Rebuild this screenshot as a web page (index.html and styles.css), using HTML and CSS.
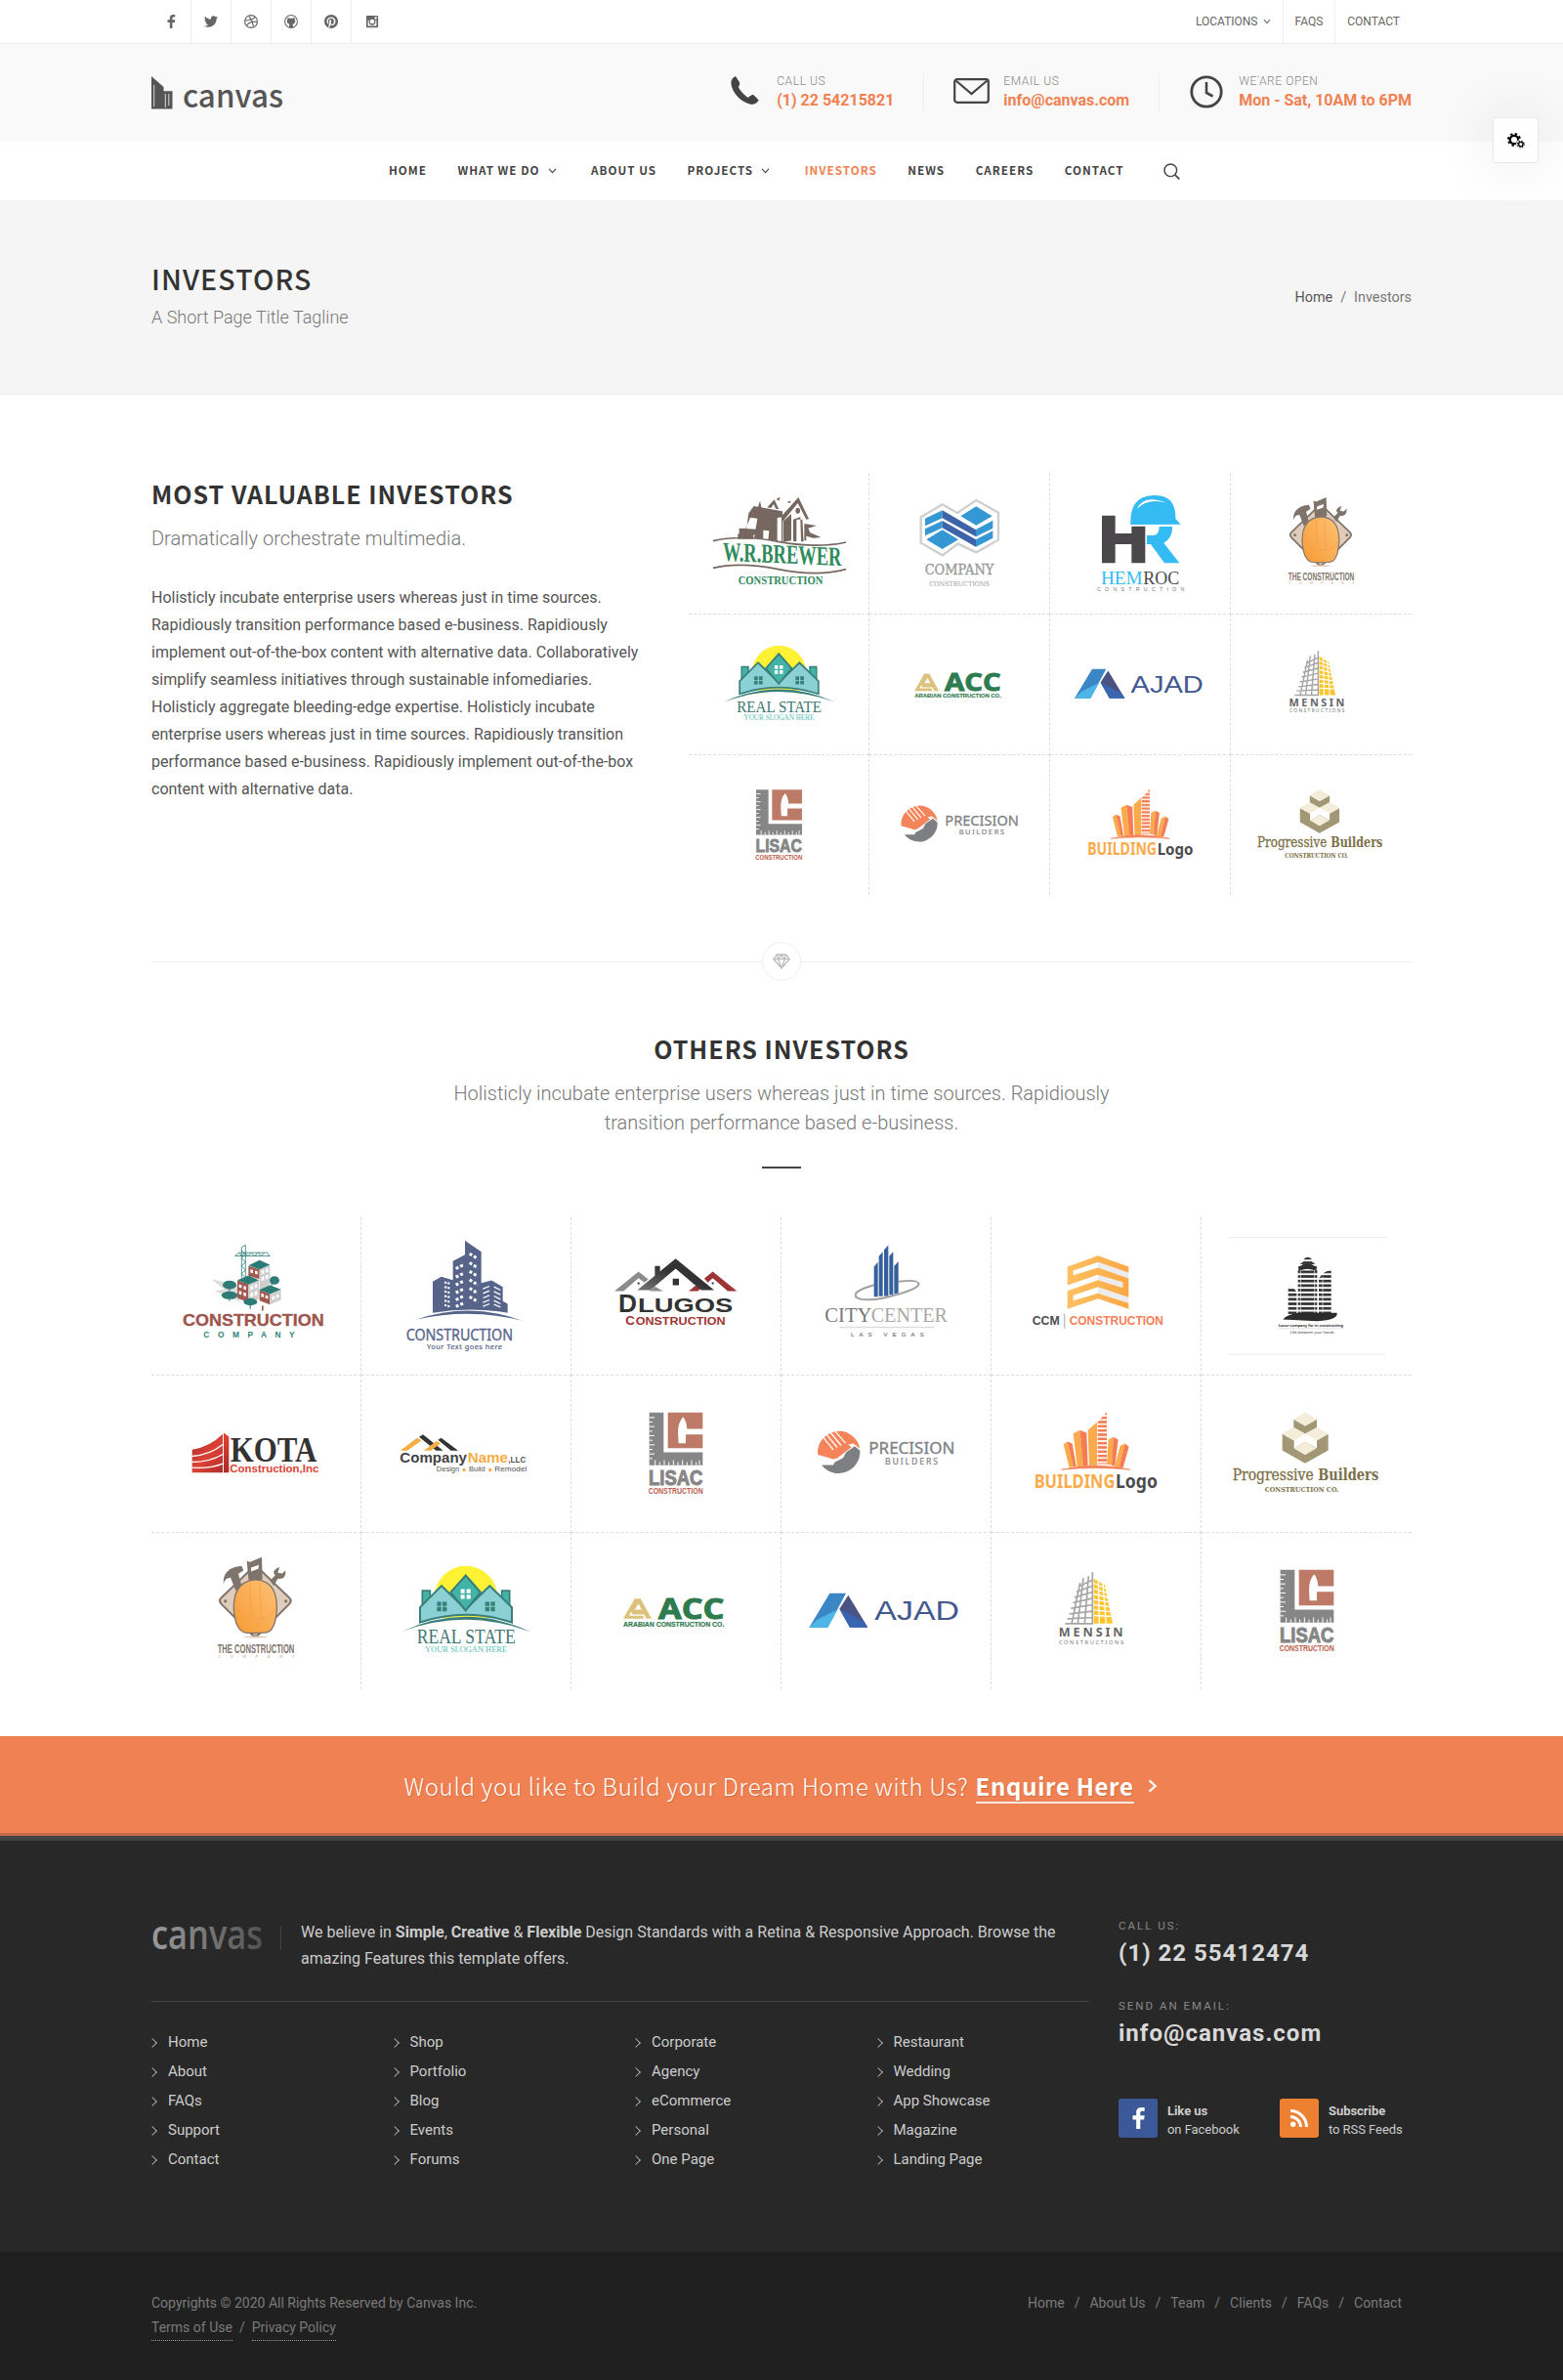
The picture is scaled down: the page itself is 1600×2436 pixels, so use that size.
FILE: index.html
```html
<!DOCTYPE html>
<html lang="en">
<head>
<meta charset="utf-8">
<title>Investors | Canvas</title>
<link rel="stylesheet" href="styles.css">
</head>
<body>

<svg class="sprite" aria-hidden="true">
  <defs>
    <linearGradient id="g-word" x1="0" x2="1" y1="0" y2="0"><stop offset="0" stop-color="#9c9c9c"/><stop offset="1" stop-color="#525252"/></linearGradient>
    <linearGradient id="g-kota" x1="0" x2="1" y1="0" y2="1"><stop offset="0" stop-color="#a32b2b"/><stop offset=".5" stop-color="#dd4234"/><stop offset="1" stop-color="#a52828"/></linearGradient>
    <linearGradient id="g-hat" x1="0" x2="1" y1="1" y2="0"><stop offset="0" stop-color="#f79a35"/><stop offset="1" stop-color="#ffc274"/></linearGradient>
    <linearGradient id="g-roof" x1="0" x2="1" y1="1" y2="0"><stop offset="0" stop-color="#777"/><stop offset=".5" stop-color="#333"/><stop offset="1" stop-color="#333"/></linearGradient>
    <linearGradient id="g-ccm" x1="0" x2="1" y1="0" y2="0"><stop offset="0" stop-color="#ffc062"/><stop offset="1" stop-color="#fba845"/></linearGradient>
    <pattern id="p-floors" width="20" height="14" patternUnits="userSpaceOnUse"><rect width="20" height="8" fill="#303030"/></pattern>
    <pattern id="p-bands" width="20" height="13" patternUnits="userSpaceOnUse" y="617"><rect width="20" height="8" fill="#f47d55"/></pattern>
    <pattern id="p-block" width="5" height="5" patternUnits="userSpaceOnUse"><rect width="5" height="5" fill="#b3a987"/><path d="M0 5L5 0" stroke="#7d7250" stroke-width="1.6"/></pattern>

    <symbol id="chev-down" viewBox="0 0 10 7"><path d="M1 1l4 4.5L9 1" fill="none" stroke="currentColor" stroke-width="1.3"/></symbol>
    <symbol id="chev-right" viewBox="0 0 7 10"><path d="M1 1l4.5 4L1 9" fill="none" stroke="currentColor" stroke-width="1.5"/></symbol>
    <symbol id="i-fb" viewBox="0 0 24 24"><path fill="currentColor" d="M14.5 24V13.5h4.2l.6-4.5h-4.8V6.2c0-1.200.5-2 2.200-2h2.600V.3C18.800.2 17.400 0 15.800 0 12.300 0 10 2.100 10 5.700V9H6v4.500h4V24z"/></symbol>
    <symbol id="i-tw" viewBox="0 0 24 24"><path fill="currentColor" d="M23.954 4.569c-.885.389-1.830.654-2.825.775 1.014-.611 1.794-1.574 2.163-2.723-.951.555-2.005.959-3.127 1.184-.896-.959-2.173-1.559-3.591-1.559-2.717 0-4.920 2.203-4.920 4.917 0 .390.045.765.127 1.124C7.691 8.094 4.066 6.130 1.640 3.161c-.427.722-.666 1.561-.666 2.475 0 1.710.870 3.213 2.188 4.096-.807-.026-1.566-.248-2.228-.616v.061c0 2.385 1.693 4.374 3.946 4.827-.413.111-.849.171-1.296.171-.314 0-.615-.030-.916-.086.631 1.953 2.445 3.377 4.604 3.417-1.680 1.319-3.809 2.105-6.102 2.105-.390 0-.779-.023-1.170-.067 2.189 1.394 4.768 2.209 7.557 2.209 9.054 0 13.999-7.496 13.999-13.986 0-.209 0-.420-.015-.630.961-.689 1.800-1.560 2.460-2.548z"/></symbol>
    <symbol id="i-dr" viewBox="0 0 24 24"><g fill="none" stroke="currentColor" stroke-width="1.900"><circle cx="12" cy="12" r="11"/><path d="M8 2c4 5 7 11 8.500 20M1 10c8 0 14-1 18.500-6M4 20c4-7 11-9 19-7"/></g></symbol>
    <symbol id="i-gh" viewBox="0 0 24 24"><circle cx="12" cy="12" r="11" fill="none" stroke="currentColor" stroke-width="1.800"/><path fill="currentColor" d="M6 5l3.200 1.600a12 12 0 0 1 5.600 0L18 5c.5 1.500.5 2.500.3 3.400C20 11 19.500 16 14.500 16.500c.6.800.7 1.500.7 2.500v4h-6.400v-4c0-1 .1-1.700.7-2.500C4.500 16 4 11 5.700 8.400 5.500 7.500 5.500 6.500 6 5z"/></symbol>
    <symbol id="i-pi" viewBox="0 0 24 24"><path fill="currentColor" d="M12 0C5.373 0 0 5.372 0 12c0 5.084 3.163 9.426 7.627 11.174-.105-.949-.2-2.405.042-3.441.218-.937 1.407-5.965 1.407-5.965s-.359-.719-.359-1.782c0-1.668.967-2.914 2.171-2.914 1.023 0 1.518.769 1.518 1.690 0 1.029-.655 2.568-.994 3.995-.283 1.194.599 2.169 1.777 2.169 2.133 0 3.772-2.249 3.772-5.495 0-2.873-2.064-4.882-5.012-4.882-3.414 0-5.418 2.561-5.418 5.207 0 1.031.397 2.138.893 2.738.098.119.112.224.083.345l-.333 1.360c-.053.220-.174.267-.402.161-1.499-.698-2.436-2.889-2.436-4.649 0-3.785 2.750-7.262 7.929-7.262 4.163 0 7.398 2.967 7.398 6.931 0 4.136-2.607 7.464-6.227 7.464-1.216 0-2.359-.631-2.750-1.378l-.748 2.853c-.271 1.043-1.002 2.350-1.492 3.146 1.124.347 2.317.535 3.554.535 6.627 0 12-5.373 12-12S18.627 0 12 0z"/></symbol>
    <symbol id="i-in" viewBox="0 0 24 24"><path fill="currentColor" fill-rule="evenodd" d="M3.500 1.500h17a2 2 0 0 1 2 2v17a2 2 0 0 1-2 2h-17a2 2 0 0 1-2-2v-17a2 2 0 0 1 2-2zM16.500 4v3.500H20V4zM4.500 10v9.500h15V10h-2a6 6 0 1 1-11 0zM12 8a4 4 0 1 0 0 8 4 4 0 0 0 0-8z"/></symbol>

    <g id="m-hat">
      <path d="M335 1092q6 0 12 6l92 88q10 10 0 20l-92 92q-12 14-24 0l-92-92q-10-10 0-20l92-88q6-6 12-6z" fill="#dfccbb" stroke="#7f746c" stroke-width="6"/>
      <circle cx="243" cy="1197" r="5" fill="#7f746c"/><circle cx="429" cy="1197" r="5" fill="#7f746c"/>
      <g fill="#7f746c"><path d="M237 1144q-2-50 56-55l6 14-16 10 10 36-18 16-16-40q-16 0-22 19z"/><path d="M309 1074l10 3 36-15 2 68-42 8z"/><path d="M380 1134l16-16q-14-14 14-26l-6 18 14 2 10-10q2 30-24 26l-12 22z"/></g>
      <path d="M322 1094l24-8-2 12-22 8z" fill="#fff"/>
      <path d="M337 1131q66 4 64 90-4 72-36 73-32 2-60 0-32-6-36-73-2-86 68-90z" fill="url(#g-hat)" stroke="#7f746c" stroke-width="4"/>
      <path d="M273 1215q30 30 54 36 16 2 28 0 30-6 44-36M320 1140q-2 60 4 85l6 25M350 1140q-2 60 4 80v30" fill="none" stroke="#f0a04c" stroke-width="2.500"/>
      <ellipse cx="336" cy="1307" rx="36" ry="3" fill="#e0cdbb"/>
    </g>
    <g id="m-real">
      <circle cx="982" cy="1186" r="97" fill="#fff133"/>
      <path d="M780 1290q200-90 402 0v60H780z" fill="#fff"/>
      <path d="M848 1165h24v35l-24 20zM1092 1165h24v50l-24-15z" fill="#44b3a7" stroke="#387f7a" stroke-width="5"/>
      <path d="M841 1262v-46l66-66 74 72 74-72 68 66v46q-140-46-282 0z" fill="#8ad0d5" stroke="#387f7a" stroke-width="6"/>
      <path d="M981 1118l46 52-46 56-46-56z" fill="#44b3a7" stroke="#387f7a" stroke-width="6"/>
      <path d="M783 1291q200-92 398 0-200-74-398 0z" fill="#387f7a"/>
      <path d="M966 1160h12v13h-12zM984 1160h12v13h-12zM966 1177h12v13h-12zM984 1177h12v13h-12z" fill="#fff"/>
      <path d="M893 1199h13v13h-13zM910 1199h13v13h-13zM893 1215h13v13h-13zM910 1215h13v13h-13zM1041 1199h13v13h-13zM1058 1199h13v13h-13zM1041 1215h13v13h-13zM1058 1215h13v13h-13z" fill="#387f7a"/>
    </g>
    <g id="m-acc"><path d="M210 1189h18l34 62h-16l-24-46-12 18h22l10 15h-38l-5-8-6 12h44v9h-62z" fill="#dcc27d"/></g>
    <g id="m-ajad">
      <path d="M809 1173h50l-56 105h-57z" fill="#3b86c4"/><path d="M746 1278l24-24 64-32-31 56z" fill="#4fb4e6"/>
      <path d="M866 1179l60 99h-55l-32-57z" fill="#4a5484"/><path d="M839 1221l32 57h55l-12-18z" fill="#3b65b0"/>
    </g>
    <g id="m-mensin">
      <path d="M326 1108v158h-84M262 1266l26-125M281 1266l17-140M302 1266l12-146M284 1152l42-20M277 1168l49-18M271 1185l55-16M266 1202l60-14M260 1219l66-11M255 1236l71-8M249 1251l77-4" fill="none" stroke="#a5a5a5" stroke-width="5"/>
      <path d="M330 1128l34 20 24 118h-58z" fill="#fdc52f"/>
      <path d="M344 1128l3 140M358 1140l10 128M330 1142l42 18M330 1158l48 16M330 1175l50 12M330 1192l54 9M330 1208l58 8M330 1224l60 6M330 1241l62 3" fill="none" stroke="#fff" stroke-width="4"/>
    </g>
    <g id="m-lisac">
      <path d="M900 1101h44v122h120v40H900z" fill="#868686"/>
      <path d="M957 1101h107v50h-48q-2-24-12-37-16 16-16 48l2 33h22v-27h52v42H957z" fill="#bc7a67"/>
      <path d="M900 1116h16M900 1130h10M900 1144h16M900 1158h10M900 1172h16M900 1186h10M900 1200h16M900 1214h10M900 1228h16M900 1242h10M918 1263v-16M932 1263v-10M946 1263v-16M960 1263v-10M974 1263v-16M988 1263v-10M1002 1263v-16M1016 1263v-10M1030 1263v-16M1044 1263v-10M1054 1263v-16" stroke="#fff" stroke-width="3"/>
    </g>
    <g id="m-precision">
      <path d="M838 675a66 66 0 0 1 64 54l-20-16-16 3 10 8-44 34-12 3-48-14a66 66 0 0 1 66-72z" fill="#f5845a"/>
      <path d="M784 688l36 44M796 681l36 44M810 677l34 42M826 676l32 36" stroke="#fff" stroke-width="4"/>
      <path d="M902 735a66 66 0 0 1-118 44h36l4-8 26-14 10-18 26-18z" fill="#7d7f82"/>
    </g>
    <g id="m-blogo">
      <path d="M237 715l12-8 20 76-14 4zM267 682l20-10 12 110-20 2zM312 672l28-25v133l-24 2zM375 700l15-7-4 86-16-2zM411 720l15-7-18 74-14-2z" fill="#fbab4c"/>
      <path d="M249 707l15 6 12 70-8 2zM287 672l21 8 4 102-14 1zM390 693l15 8-10 82-10-3zM426 713l12 10-18 64-12-1z" fill="#f47d55"/>
      <path d="M342 648l28-32v160h-28z" fill="url(#p-bands)"/>
      <path d="M231 793q104-24 210 0-104-10-210 0z" fill="#f47d55" stroke="#f47d55" stroke-width="2"/>
    </g>
    <g id="m-prog">
      <path d="M941 639l35 20 36-20v28l-36 16-35-18zM906 684l36 20v24l34-20 36 20v-24l35-20v50l-71 40-70-40z" fill="url(#p-block)"/>
      <path d="M976 617l37 22-37 20-35-20zM941 663l35 20-34 20-36-20zM1012 663l35 20-35 20-36-20zM976 708l34 20-34 20-34-20z" fill="#f4edda"/>
    </g>
  </defs>
</svg>

<div class="topbar">
  <div class="container topbar-row">
    <ul class="social">
      <li><svg><use href="#i-fb"/></svg></li>
      <li><svg><use href="#i-tw"/></svg></li>
      <li><svg><use href="#i-dr"/></svg></li>
      <li><svg><use href="#i-gh"/></svg></li>
      <li><svg><use href="#i-pi"/></svg></li>
      <li><svg><use href="#i-in"/></svg></li>
    </ul>
    <ul class="toplinks">
      <li>LOCATIONS <svg class="cd"><use href="#chev-down"/></svg></li>
      <li>FAQS</li>
      <li>CONTACT</li>
    </ul>
  </div>
</div>

<header class="header">
  <div class="container header-row">
    <a class="logo">
      <svg width="140" height="44" viewBox="0 0 140 44">
        <path d="M0 3l12.500 11v4.200H21.500V36.500H0z" fill="#555"/><path d="M2.700 12v22M14.300 21v14M17.800 21v12" stroke="#f9f9f9" stroke-width=".8"/>
        <text x="32" y="34.500" class="head m" font-size="32.500" fill="#555" textLength="103" lengthAdjust="spacingAndGlyphs">canvas</text>
      </svg>
    </a>
    <ul class="contacts">
      <li>
        <svg class="c-icon phone" viewBox="0 0 29 29"><path d="M5 0C1.500 1.500 0 4.500.5 8 1.500 17 11 27 20.500 28.800 24 29.300 27 27.500 28.700 24.500L23.300 19c-2.500.2-4 1.300-5.300 3-4-2.500-8.500-7-10.200-11.300C9.200 9.500 9.300 8 9.200 6.500z" fill="#444"/></svg>
        <div><span>CALL US</span><strong>(1) 22 54215821</strong></div>
      </li>
      <li>
        <svg class="c-icon mail" viewBox="0 0 37 26"><rect x="1.200" y="1.200" width="34.600" height="23.600" rx="2.500" fill="none" stroke="#444" stroke-width="2.200"/><path d="M2.500 2.500L18.500 16 34.500 2.500" fill="none" stroke="#444" stroke-width="2.200"/></svg>
        <div><span>EMAIL US</span><strong>info@canvas.com</strong></div>
      </li>
      <li>
        <svg class="c-icon clock" viewBox="0 0 34 34"><circle cx="17" cy="17" r="15.200" fill="none" stroke="#444" stroke-width="2.800"/><path d="M17 7v11l6.500 3.500" fill="none" stroke="#444" stroke-width="2.600"/></svg>
        <div><span>WE'ARE OPEN</span><strong>Mon - Sat, 10AM to 6PM</strong></div>
      </li>
    </ul>
  </div>
</header>

<nav class="nav">
  <a>HOME</a>
  <a>WHAT WE DO<svg class="nd"><use href="#chev-down"/></svg></a>
  <a>ABOUT US</a>
  <a>PROJECTS<svg class="nd"><use href="#chev-down"/></svg></a>
  <a class="current">INVESTORS</a>
  <a>NEWS</a>
  <a>CAREERS</a>
  <a>CONTACT</a>
  <svg class="search" viewBox="0 0 17 17"><circle cx="7.300" cy="7.300" r="6.300" fill="none" stroke="#444" stroke-width="1.400"/><path d="M11.800 11.800l4.500 4.500" stroke="#444" stroke-width="1.700"/></svg>
</nav>

<div class="switcher">
  <svg viewBox="0 0 20 18" width="20" height="18"><circle cx="8" cy="8" r="4.200" fill="none" stroke="#000" stroke-width="2.200"/><circle cx="8" cy="8" r="6" fill="none" stroke="#000" stroke-width="2" stroke-dasharray="2.360 2.352"/><circle cx="14.800" cy="12.600" r="4.800" fill="#fff"/><circle cx="14.800" cy="12.600" r="2.200" fill="none" stroke="#000" stroke-width="1.300"/><circle cx="14.800" cy="12.600" r="3.400" fill="none" stroke="#000" stroke-width="1.200" stroke-dasharray="1.300 1.370"/></svg>
</div>

<section class="page-title">
  <div class="container title-row">
    <div>
      <h1>INVESTORS</h1>
      <p>A Short Page Title Tagline</p>
    </div>
    <div class="crumbs"><a>Home</a><i>/</i><span>Investors</span></div>
  </div>
</section>

<main class="container content">
  <div class="intro">
    <div class="intro-text">
      <h3>MOST VALUABLE INVESTORS</h3>
      <p class="lead">Dramatically orchestrate multimedia.</p>
      <p class="copy">Holisticly incubate enterprise users whereas just in time sources.<br>Rapidiously transition performance based e-business. Rapidiously<br>implement out-of-the-box content with alternative data. Collaboratively<br>simplify seamless initiatives through sustainable infomediaries.<br>Holisticly aggregate bleeding-edge expertise. Holisticly incubate<br>enterprise users whereas just in time sources. Rapidiously transition<br>performance based e-business. Rapidiously implement out-of-the-box<br>content with alternative data.</p>
    </div>
    <ul class="clients four">
      <li><svg viewBox="84 72 417 312">
        <g fill="#766861"><path d="M199 136l16-22 88 16v18l-16 2v72l-28-4 3-28-18-2v26l-28-2 10-60-22-3-24 56h34v10h-48v-16h24z"/><path d="M300 145l52-58 32 66-8 2-26-50-46 56v63l-4 2z"/><path d="M306 160l24-22v82l-24 4zM336 155l22-8v8h-12v68l-10-2zM358 155h6l4 68h-8zM370 168l38 6-26 8 6 14 34 14-24 2-22-6v14h-6z"/><path d="M170 182l66 4-16 14-22 12-28-2zM226 122l8-24 5 24zM256 118l22-24 14 30-10-2-6-14-8 12zM284 92l12-6-4 12zM318 100l12-2-6 8z"/></g>
        <ellipse cx="350" cy="128" rx="7" ry="9" fill="#766861"/>
        <path d="M90 221q80-20 200 2t208 2M90 304q80-20 200 4t208 0" fill="none" stroke="#766861" stroke-width="5"/>
        <text transform="translate(120 281) skewY(2.600)" class="serif b" font-size="83" fill="#2f8a5c" textLength="364" lengthAdjust="spacingAndGlyphs">W.R.BREWER</text>
        <text x="167" y="353" class="serif b" font-size="40" fill="#2f8a5c" textLength="260" lengthAdjust="spacingAndGlyphs">CONSTRUCTION</text>
      </svg></li>
      <li><svg viewBox="639 72 417 312">
        <path d="M728 148l66-39 46 26 58-39 68 38v84l-68 38-56-26-48 35-66-38z" fill="none" stroke="#cfcfcf" stroke-width="7"/>
        <path d="M850 145l48-30 49 30-49 28zM745 217l49-30 49 30-49 29z" fill="#3597d3"/>
        <path d="M741 152l53-25v24l-53 24zM741 184l53-25v22l-53 24zM949 158v24l-52 26v-22zM949 190v22l-52 27v-22z" fill="#3597d3"/>
        <path d="M794 127l103 60v21l-103-57zM794 159l103 58v22l-103-58z" fill="#3d63a8"/>
        <text x="740" y="323" class="dserif" font-size="42" fill="#999" stroke="#999" textLength="212" lengthAdjust="spacingAndGlyphs">COMPANY</text>
        <text x="754" y="359" class="dserif" font-size="21" fill="#999" textLength="185" lengthAdjust="spacingAndGlyphs">CONSTRUCTIONS</text>
      </svg></li>
      <li><svg viewBox="84 72 417 312">
        <path d="M174 143h41v55h50v-22h42v113h-42v-58h-50v58h-41z" fill="#4a484a"/>
        <path d="M312 204h18q20 0 20-27h40q2 34-26 50l48 62h-46l-42-58h-12zM262 171q-4-86 68-90t70 72l16 17z" fill="#34bbf3"/>
        <path d="M282 122q20-46 92-18-60-16-92 18z" fill="#fff"/>
        <text x="171" y="355" class="serif" font-size="56" fill="#34bbf3" textLength="128" lengthAdjust="spacingAndGlyphs">HEM</text>
        <text x="301" y="355" class="serif" font-size="56" fill="#4a484a" textLength="111" lengthAdjust="spacingAndGlyphs">ROC</text>
        <text x="159" y="375" class="sans" font-size="16" fill="#777" textLength="268">CONSTRUCTION</text>
      </svg></li>
      <li><svg viewBox="94 1045 486 362"><use href="#m-hat"/>
        <text x="219" y="1358" class="sans b" font-size="41" fill="#7f746c" textLength="236" lengthAdjust="spacingAndGlyphs">THE CONSTRUCTION</text>
        <text x="221" y="1372" class="sans b" font-size="12" fill="#d8bfae" textLength="234">COMPANY</text>
      </svg></li>
      <li><svg viewBox="739 1045 486 362"><use href="#m-real"/>
        <text x="831" y="1327" class="serif" font-size="62" fill="#3e7672" textLength="303" lengthAdjust="spacingAndGlyphs">REAL STATE</text>
        <text x="856" y="1355" class="serif" font-size="27" fill="#56c0b4" textLength="252" lengthAdjust="spacingAndGlyphs">YOUR SLOGAN HERE</text>
      </svg></li>
      <li><svg viewBox="94 1045 486 362"><use href="#m-acc"/>
        <text x="283" y="1251" class="open b" font-size="86" fill="#2f7b50" stroke="#2f7b50" stroke-width="3" textLength="202" lengthAdjust="spacingAndGlyphs">ACC</text>
        <text x="175" y="1275" class="sans b" font-size="19" fill="#2f7b50" stroke="#2f7b50" stroke-width=".5" textLength="310" lengthAdjust="spacingAndGlyphs">ARABIAN CONSTRUCTION CO.</text>
      </svg></li>
      <li><svg viewBox="739 1045 486 362"><use href="#m-ajad"/>
        <text x="947" y="1256" class="sans" font-size="82" fill="#42588f" textLength="260" lengthAdjust="spacingAndGlyphs">AJAD</text>
      </svg></li>
      <li><svg viewBox="94 1045 486 362"><use href="#m-mensin"/>
        <text x="222" y="1305" class="noto b" font-size="38" fill="#666" textLength="198">MENSIN</text>
        <text x="223" y="1329" class="noto" font-size="17" fill="#777" textLength="198">CONSTRUCTIONS</text>
      </svg></li>
      <li><svg viewBox="739 1045 486 362"><use href="#m-lisac"/>
        <text x="898" y="1323" class="sans b" font-size="66" fill="#868686" stroke="#868686" stroke-width="3" textLength="166" lengthAdjust="spacingAndGlyphs">LISAC</text>
        <text x="897" y="1351" class="sans b" font-size="25" fill="#bb5d4d" textLength="168" lengthAdjust="spacingAndGlyphs">CONSTRUCTION</text>
      </svg></li>
      <li><svg viewBox="739 562 486 362"><use href="#m-precision"/>
        <text x="929" y="746" class="noto" font-size="51" fill="#808285" stroke="#808285" textLength="264" lengthAdjust="spacingAndGlyphs">PRECISION</text>
        <text x="979" y="777" class="noto" font-size="26" fill="#808285" stroke="#808285" stroke-width=".6" textLength="162">BUILDERS</text>
      </svg></li>
      <li><svg viewBox="94 562 486 362"><use href="#m-blogo"/>
        <text x="147" y="850" class="noto b" font-size="60" fill="#fbab4c" textLength="248" lengthAdjust="spacingAndGlyphs">BUILDING</text>
        <text x="397" y="850" class="noto b" font-size="57" fill="#4a4b4d" textLength="129" lengthAdjust="spacingAndGlyphs">Logo</text>
      </svg></li>
      <li><svg viewBox="739 562 486 362"><use href="#m-prog"/>
        <text x="753" y="825" class="dserif" font-size="50" fill="#7d7048" stroke="#7d7048" textLength="249" lengthAdjust="spacingAndGlyphs">Progressive</text>
        <text x="1016" y="825" class="dserif b" font-size="50" fill="#7d7048" textLength="186" lengthAdjust="spacingAndGlyphs">Builders</text>
        <text x="852" y="863" class="dserif b" font-size="24" fill="#7d7048" textLength="227" lengthAdjust="spacingAndGlyphs">CONSTRUCTION CO.</text>
      </svg></li>
    </ul>
  </div>

  <div class="divider"><span><svg viewBox="0 0 18 16" width="18" height="16"><path d="M4.500 1h9l3.700 4.700L9 15 .8 5.700zM.8 5.700h16.400M5.500 5.700L9 15l3.500-9.300M4.500 1l1.300 4.700L9 1.500l3.200 4.200L13.500 1" fill="none" stroke="#bbb" stroke-width="1.300"/></svg></span></div>

  <div class="heading">
    <h3>OTHERS INVESTORS</h3>
    <p>Holisticly incubate enterprise users whereas just in time sources. Rapidiously<br>transition performance based e-business.</p>
  </div>

  <ul class="clients six">
    <li><svg viewBox="94 79 486 362">
      <path d="M200 208l90 20v50l-80-34 30-4z" fill="#ddd"/>
      <path d="M293 205V110l12-6v100M293 120l12 12-12 12 12 12-12 12 12 12-12 12 12 12M273 137l12-10h86l9 10zM285 127l8 10 10-10 10 10 10-10 10 10 10-10 10 10 10-10" fill="none" stroke="#34827d" stroke-width="2.500"/>
      <path d="M314 168l34 10v30l-34-10zM280 212l34 12v56l-34-14zM348 242l32 12v32l-32-12z" fill="#a4574e"/>
      <path d="M348 178l32-14v64l-32 14zM314 224l32-14v60l-32 12zM380 254l34-14v32l-34 14z" fill="#cfcfcf"/>
      <path d="M314 166l34-16 32 14-32 14zM280 211l34-14 32 14-32 14zM346 241l34-14 34 13-34 14z" fill="#2b7a75"/>
      <path d="M320 178l8 2v10l-8-2zM334 182l8 2v10l-8-2zM285 224l8 2v10l-8-2zM299 229l8 2v10l-8-2zM285 244l8 2v10l-8-2zM299 249l8 2v10l-8-2zM354 182l8-3v12l-8 3zM367 177l8-3v12l-8 3zM354 202l8-3v12l-8 3zM367 197l8-3v12l-8 3zM320 230l8-3v12l-8 3zM333 225l8-3v12l-8 3zM320 252l8-3v12l-8 3zM333 247l8-3v12l-8 3zM353 252l8 2v10l-8-2zM366 257l8 2v10l-8-2zM386 262l8-3v10l-8 3zM399 257l8-3v10l-8 3z" fill="#fff"/>
      <g fill="#2f7b77"><ellipse cx="256" cy="226" rx="21" ry="13"/><ellipse cx="256" cy="258" rx="25" ry="12"/><ellipse cx="320" cy="278" rx="21" ry="11"/><ellipse cx="394" cy="212" rx="15" ry="13"/><path d="M254 226h3v50h-3zM318 280h3v20h-3zM384 212h3v18h-3z"/></g>
      <path d="M355 290h5v15h-5z" fill="#a4574e"/>
      <text x="112" y="353" class="sans b" font-size="50" fill="#9d554e" stroke="#9d554e" textLength="434" lengthAdjust="spacingAndGlyphs">CONSTRUCTION</text>
      <text x="176" y="387" class="sans b" font-size="25" fill="#2f7f7b" textLength="280">COMPANY</text>
    </svg></li>
    <li><svg viewBox="739 79 486 362">
      <path d="M880 314v-98l26-15 36 10v-58l37-20V90l50 34v96l32-8 34 20v44l15 8v28q-114-20-230 0z" fill="#57648a"/>
      <path d="M830 332q166-56 325 4-160-40-325-4z" fill="#57648a"/>
      <path d="M916 218l16 4M916 232l16 4M916 246l16 4M916 260l16 4M916 274l16 4M916 288l16 4" stroke="#fff" stroke-width="6" stroke-dasharray="7 3"/>
      <path d="M951 176l24-12M951 202l24-12M951 226l24-12M951 250l24-12M951 272l24-12M951 292l24-10M993 130l26 16M993 158l26 16M993 184l26 16M993 210l26 16M993 236l26 16M993 262l26 16" stroke="#fff" stroke-width="9" stroke-dasharray="9 6"/>
      <path d="M1034 238l20-8M1034 252l20-8M1034 266l20-8M1034 280l20-8M1034 292l20-8M1068 232l20 10M1068 246l20 10M1068 260l20 10M1068 274l20 10M1068 286l20 8" stroke="#fff" stroke-width="4"/>
      <text x="798" y="397" class="noto" font-size="51" fill="#57648a" stroke="#57648a" textLength="328" lengthAdjust="spacingAndGlyphs">CONSTRUCTION</text>
      <text x="862" y="425" class="noto" font-size="22" fill="#57648a" stroke="#57648a" stroke-width=".6" textLength="231">Your Text goes here</text>
    </svg></li>
    <li><svg viewBox="94 79 486 362">
      <path d="M148 245l74-60 30 24-12 10-18-14-46 40zM256 245l16-14 26 14z" fill="#8c8c8c"/>
      <path d="M376 245l74-60 74 60h-28l-46-40-46 40z" fill="#9f3434"/>
      <path d="M400 222l20-20 36 40h-36z" fill="#fff"/>
      <path d="M218 242l54-44v-30h16v16l48-39 118 97h-40l-78-66-78 66z" fill="url(#g-roof)"/>
      <path d="M327 207h19v20h-19zM219 218h6v6h-6zM447 218h6v6h-6z" fill="#333"/>
      <text y="310" class="sans b" fill="#333"><tspan x="160" font-size="76" textLength="57" lengthAdjust="spacingAndGlyphs">D</tspan><tspan x="220" font-size="62" textLength="292" lengthAdjust="spacingAndGlyphs">LUGOS</tspan></text>
      <text y="348" class="sans b" fill="#9f3434"><tspan x="182" font-size="39" textLength="29" lengthAdjust="spacingAndGlyphs">C</tspan><tspan x="213" font-size="33" textLength="276" lengthAdjust="spacingAndGlyphs">ONSTRUCTION</tspan></text>
    </svg></li>
    <li><svg viewBox="739 79 486 362">
      <path d="M945 226q-70 20-54 38 20 16 100-2 90-22 92-40-6-14-62-6" fill="none" stroke="#a0a0a0" stroke-width="6"/>
      <path d="M945 170l12-14v106h-12zM960 138l12-14v137h-12zM976 118l13-14v156h-13zM992 138l12-14v132h-12zM1007 168l13-14v97l-13 3z" fill="#34619b"/>
      <text x="794" y="340" class="serif" font-size="65" fill="#777" textLength="144" lengthAdjust="spacingAndGlyphs">CITY</text>
      <text x="936" y="340" class="serif" font-size="65" fill="#a9a9a9" textLength="235" lengthAdjust="spacingAndGlyphs">CENTER</text>
      <path d="M840 356h290" stroke="#ddd" stroke-width="5"/>
      <text x="874" y="384" class="sans" font-size="18" fill="#777" stroke="#777" stroke-width=".5" textLength="224">LAS VEGAS</text>
    </svg></li>
    <li><svg viewBox="94 79 486 362">
      <path d="M343 155l94 32v20l-94-32zM343 230l94 32v20l-94-32zM343 193l76 24v18l-76-22z" fill="#ececee"/>
      <path d="M343 136l94 34v18l-94-32-76 26v14l76-23 94 33v58l-94-32-76 26v16l76-22 94 30v18l-94-32-94 32v-56l94-33 76 24v-18l-76-22-94 32v-57z" fill="url(#g-ccm)"/>
      <text x="141" y="350" class="sans b" font-size="37" fill="#4b4d50" textLength="84" lengthAdjust="spacingAndGlyphs">CCM</text>
      <path d="M240 315v45" stroke="#c5c5c8" stroke-width="5"/>
      <text x="255" y="350" class="sans b" font-size="37" fill="#f77f5a" textLength="289" lengthAdjust="spacingAndGlyphs">CONSTRUCTION</text>
    </svg></li>
    <li><svg viewBox="739 79 486 362">
      <path d="M739 80h486M739 439h486" stroke="#ededed" stroke-width="3"/>
      <path d="M954 316V176q4-16 16-20 0-14 14-15 14 1 14 15 12 4 15 20v140zM924 316v-82q18-4 26 16v66zM1018 316V206q18-26 38-24v134z" fill="url(#p-floors)"/>
      <path d="M954 186q4-26 29-26t30 26q-30-18-59 0z" fill="#303030"/>
      <path d="M962 180v136M1005 180v136M1030 200v116" stroke="#fff" stroke-width="2"/>
      <path d="M908 332q10-14 46-20h120q4 22-60 25z" fill="#2b2b2b"/>
      <text x="894" y="355" class="noto b" font-size="12" fill="#333" textLength="199" lengthAdjust="spacingAndGlyphs">Luxor company for in constructing</text>
      <path d="M894 360h199" stroke="#aaa" stroke-width="1"/>
      <text x="931" y="376" class="noto" font-size="12" fill="#333" textLength="134" lengthAdjust="spacingAndGlyphs">Life between your hands</text>
    </svg></li>
    <li><svg viewBox="94 562 486 362">
      <path d="M141 732q54-8 94-48v118h-94zM238 680l16 12v110h-16z" fill="url(#g-kota)"/>
      <path d="M141 752q54-4 94-36M141 770q54 0 94-24M141 787q54 4 94-12" fill="none" stroke="#fff" stroke-width="4"/>
      <text x="258" y="770" class="serif b" font-size="108" fill="#333" textLength="266" lengthAdjust="spacingAndGlyphs">KOTA</text>
      <text x="257" y="801" class="sans b" font-size="35" fill="#e04236" textLength="273" lengthAdjust="spacingAndGlyphs">Construction,Inc</text>
    </svg></li>
    <li><svg viewBox="739 562 486 362">
      <path d="M780 735l52-39 14 7-44 32z" fill="#f5ad45"/><path d="M838 693l12-8 62 50h-22z" fill="#333"/><path d="M852 735l40-30 12 8-30 22z" fill="#f5ad45"/><path d="M896 702l10-6 52 39h-22z" fill="#333"/>
      <text x="779" y="773" class="sans b" font-size="44" fill="#444" textLength="206" lengthAdjust="spacingAndGlyphs">Company</text>
      <text x="987" y="773" class="sans b" font-size="44" fill="#f5ad45" textLength="124" lengthAdjust="spacingAndGlyphs">Name</text>
      <text x="1112" y="773" class="sans b" font-size="27" fill="#555" textLength="54" lengthAdjust="spacingAndGlyphs">,LLC</text>
      <g class="sans" font-size="24" fill="#555"><text x="891" y="800" textLength="71" lengthAdjust="spacingAndGlyphs">Design</text><text x="991" y="800" textLength="50" lengthAdjust="spacingAndGlyphs">Build</text><text x="1070" y="800" textLength="99" lengthAdjust="spacingAndGlyphs">Remodel</text></g>
      <circle cx="976" cy="794" r="5" fill="#f5ad45"/><circle cx="1056" cy="794" r="5" fill="#f5ad45"/>
    </svg></li>
    <li><svg viewBox="739 1045 486 362"><use href="#m-lisac"/>
      <text x="898" y="1323" class="sans b" font-size="66" fill="#868686" stroke="#868686" stroke-width="3" textLength="166" lengthAdjust="spacingAndGlyphs">LISAC</text>
      <text x="897" y="1351" class="sans b" font-size="25" fill="#bb5d4d" textLength="168" lengthAdjust="spacingAndGlyphs">CONSTRUCTION</text>
    </svg></li>
    <li><svg viewBox="739 562 486 362"><use href="#m-precision"/>
      <text x="929" y="746" class="noto" font-size="51" fill="#808285" stroke="#808285" textLength="264" lengthAdjust="spacingAndGlyphs">PRECISION</text>
      <text x="979" y="777" class="noto" font-size="26" fill="#808285" stroke="#808285" stroke-width=".6" textLength="162">BUILDERS</text>
    </svg></li>
    <li><svg viewBox="94 562 486 362"><use href="#m-blogo"/>
      <text x="147" y="850" class="noto b" font-size="60" fill="#fbab4c" textLength="248" lengthAdjust="spacingAndGlyphs">BUILDING</text>
      <text x="397" y="850" class="noto b" font-size="57" fill="#4a4b4d" textLength="129" lengthAdjust="spacingAndGlyphs">Logo</text>
    </svg></li>
    <li><svg viewBox="739 562 486 362"><use href="#m-prog"/>
      <text x="753" y="825" class="dserif" font-size="50" fill="#7d7048" stroke="#7d7048" textLength="249" lengthAdjust="spacingAndGlyphs">Progressive</text>
      <text x="1016" y="825" class="dserif b" font-size="50" fill="#7d7048" textLength="186" lengthAdjust="spacingAndGlyphs">Builders</text>
      <text x="852" y="863" class="dserif b" font-size="24" fill="#7d7048" textLength="227" lengthAdjust="spacingAndGlyphs">CONSTRUCTION CO.</text>
    </svg></li>
    <li><svg viewBox="94 1045 486 362"><use href="#m-hat"/>
      <text x="219" y="1358" class="sans b" font-size="41" fill="#7f746c" textLength="236" lengthAdjust="spacingAndGlyphs">THE CONSTRUCTION</text>
      <text x="221" y="1372" class="sans b" font-size="12" fill="#d8bfae" textLength="234">COMPANY</text>
    </svg></li>
    <li><svg viewBox="739 1045 486 362"><use href="#m-real"/>
      <text x="831" y="1327" class="serif" font-size="62" fill="#3e7672" textLength="303" lengthAdjust="spacingAndGlyphs">REAL STATE</text>
      <text x="856" y="1355" class="serif" font-size="27" fill="#56c0b4" textLength="252" lengthAdjust="spacingAndGlyphs">YOUR SLOGAN HERE</text>
    </svg></li>
    <li><svg viewBox="94 1045 486 362"><use href="#m-acc"/>
      <text x="283" y="1251" class="open b" font-size="86" fill="#2f7b50" stroke="#2f7b50" stroke-width="3" textLength="202" lengthAdjust="spacingAndGlyphs">ACC</text>
      <text x="175" y="1275" class="sans b" font-size="19" fill="#2f7b50" stroke="#2f7b50" stroke-width=".5" textLength="310" lengthAdjust="spacingAndGlyphs">ARABIAN CONSTRUCTION CO.</text>
    </svg></li>
    <li><svg viewBox="739 1045 486 362"><use href="#m-ajad"/>
      <text x="947" y="1256" class="sans" font-size="82" fill="#42588f" textLength="260" lengthAdjust="spacingAndGlyphs">AJAD</text>
    </svg></li>
    <li><svg viewBox="94 1045 486 362"><use href="#m-mensin"/>
      <text x="222" y="1305" class="noto b" font-size="38" fill="#666" textLength="198">MENSIN</text>
      <text x="223" y="1329" class="noto" font-size="17" fill="#777" textLength="198">CONSTRUCTIONS</text>
    </svg></li>
    <li><svg viewBox="739 1045 486 362"><use href="#m-lisac"/>
      <text x="898" y="1323" class="sans b" font-size="66" fill="#868686" stroke="#868686" stroke-width="3" textLength="166" lengthAdjust="spacingAndGlyphs">LISAC</text>
      <text x="897" y="1351" class="sans b" font-size="25" fill="#bb5d4d" textLength="168" lengthAdjust="spacingAndGlyphs">CONSTRUCTION</text>
    </svg></li>
  </ul>
</main>

<a class="cta"><span>Would you like to Build your Dream Home with Us?</span><strong>Enquire Here</strong><svg><use href="#chev-right"/></svg></a>

<footer class="footer">
  <div class="container footer-row">
    <div class="f-main">
      <div class="about">
        <svg width="114" height="36" viewBox="0 0 114 36"><text x="0" y="28.500" class="open sb" font-size="42" fill="url(#g-word)" textLength="114" lengthAdjust="spacingAndGlyphs">canvas</text></svg>
        <i class="bar"></i>
        <p>We believe in <strong>Simple</strong>, <strong>Creative</strong> &amp; <strong>Flexible</strong> Design Standards with a Retina &amp; Responsive Approach. Browse the<br>amazing Features this template offers.</p>
      </div>
      <div class="links">
        <ul><li>Home</li><li>About</li><li>FAQs</li><li>Support</li><li>Contact</li></ul>
        <ul><li>Shop</li><li>Portfolio</li><li>Blog</li><li>Events</li><li>Forums</li></ul>
        <ul><li>Corporate</li><li>Agency</li><li>eCommerce</li><li>Personal</li><li>One Page</li></ul>
        <ul><li>Restaurant</li><li>Wedding</li><li>App Showcase</li><li>Magazine</li><li>Landing Page</li></ul>
      </div>
    </div>
    <div class="f-side">
      <span class="label">CALL US:</span>
      <strong class="big">(1) 22 55412474</strong>
      <span class="label">SEND AN EMAIL:</span>
      <strong class="big">info@canvas.com</strong>
      <div class="follow">
        <div class="f-item"><span class="sq fb"><svg width="22" height="22"><use href="#i-fb"/></svg></span><p><b>Like us</b><br>on Facebook</p></div>
        <div class="f-item"><span class="sq rss"><svg width="20" height="20" viewBox="0 0 20 20"><circle cx="3.700" cy="16.300" r="2.700" fill="#fff"/><path d="M1 8.500A10.500 10.500 0 0 1 11.500 19M1 2.500A16.500 16.500 0 0 1 17.500 19" fill="none" stroke="#fff" stroke-width="3"/></svg></span><p><b>Subscribe</b><br>to RSS Feeds</p></div>
      </div>
    </div>
  </div>
</footer>

<div class="copyrights">
  <div class="container copy-row">
    <p>Copyrights © 2020 All Rights Reserved by Canvas Inc.<br><a>Terms of Use</a><i>/</i><a>Privacy Policy</a></p>
    <div class="c-links">Home<i>/</i>About Us<i>/</i>Team<i>/</i>Clients<i>/</i>FAQs<i>/</i>Contact</div>
  </div>
</div>
</body>
</html>
```
FILE: styles.css
```css
* { box-sizing: border-box; }
body { margin: 0; background: #fff; color: #555; font-family: Roboto, "Liberation Sans", sans-serif; font-size: 16px; }
ul { list-style: none; margin: 0; padding: 0; }
h1, h3, p { margin: 0; }
i { font-style: normal; }
svg { display: block; flex: none; }
.sprite { position: absolute; width: 0; height: 0; }
.container { width: 1290px; margin: 0 auto; }

.sans { font-family: "Liberation Sans", sans-serif; }
.serif { font-family: "Liberation Serif", serif; }
.dserif { font-family: "DejaVu Serif", serif; }
.noto { font-family: "Noto Sans", sans-serif; }
.open { font-family: "Open Sans", sans-serif; }
.head { font-family: "Noto Sans CJK SC", "Noto Sans", sans-serif; }
.b { font-weight: 700; }
.sb { font-weight: 600; }
.m { font-weight: 500; }

/* Top bar */
.topbar { height: 45px; border-bottom: 1px solid #eee; }
.topbar-row { display: flex; justify-content: space-between; height: 44px; }
.social { display: flex; }
.social li { width: 41px; height: 44px; display: flex; align-items: center; justify-content: center; border-right: 1px solid #eee; color: #666; }
.social li:last-child { border-right: 0; }
.social svg { width: 14px; height: 14px; }
.toplinks { display: flex; font-size: 12px; line-height: 44px; color: #666; }
.toplinks li { display: flex; align-items: center; padding: 0 12px; border-left: 1px solid #eee; height: 44px; }
.toplinks li:first-child { border-left: 0; }
.cd { width: 8px; height: 6px; margin-left: 5px; }

/* Header */
.header { height: 100px; background: #f9f9f9; }
.header-row { display: flex; justify-content: space-between; }
.logo { padding-top: 30px; }
.contacts { display: flex; padding-top: 30px; }
.contacts li { display: flex; height: 40px; }
.contacts li + li { border-left: 1px solid #eee; margin-left: 30px; padding-left: 30px; }
.contacts li:last-child { padding-left: 31px; }
.contacts span { display: block; font-size: 12px; font-weight: 300; line-height: 16px; letter-spacing: .6px; color: #888; }
.contacts strong { display: block; font-size: 16px; font-weight: 700; line-height: 20px; margin-top: 2px; color: #f08152; white-space: nowrap; }
.phone { width: 29px; height: 29px; margin: 3px 18px 0 0; }
.mail { width: 37px; height: 26px; margin: 5px 14px 0 0; }
.clock { width: 34px; height: 34px; margin: 2px 16px 0 0; }

/* Navigation */
.nav { height: 60px; display: flex; align-items: center; padding: 0 0 2px 398px; font-family: "Noto Sans CJK SC", "Noto Sans", sans-serif; font-weight: 700; font-size: 11.700px; letter-spacing: 1px; color: #444; line-height: 58px; }
.nav a { display: flex; align-items: center; margin-right: 31.500px; white-space: nowrap; }
.nav .current { color: #f08152; }
.nd { width: 9px; height: 6px; margin: 1px 4px 0 8px; }
.search { width: 17px; height: 17px; margin: 2px 0 0 9px; }

.switcher { position: absolute; left: 1528px; top: 120px; width: 47px; height: 47px; background: #fff; border: 1px solid #e8e8e8; border-radius: 2px; display: flex; align-items: center; justify-content: center; box-shadow: 0 0 60px rgba(0, 0, 0, .1); }

/* Page title */
.page-title { height: 199px; background: #f5f5f5; border-bottom: 1px solid #eee; }
.title-row { display: flex; justify-content: space-between; }
.page-title h1 { font-family: "Noto Sans CJK SC", "Noto Sans", sans-serif; font-weight: 500; font-size: 28.500px; line-height: 40px; letter-spacing: 1.150px; color: #333; margin-top: 60px; }
.page-title p { font-weight: 300; font-size: 18px; line-height: 28px; color: #777; margin-top: 6px; }
.crumbs { display: flex; gap: 8px; font-size: 14.400px; line-height: 20px; color: #777; margin-top: 90px; }
.crumbs a { color: #555; }

/* Investors */
.content { padding-top: 80px; }
.intro { display: flex; justify-content: space-between; }
.intro-text { width: 520px; }
.intro h3, .heading h3 { font-family: "Noto Sans CJK SC", "Noto Sans", sans-serif; font-weight: 700; font-size: 25px; line-height: 36px; letter-spacing: 1px; color: #333; white-space: nowrap; }
.intro h3 { margin-top: 3px; }
.lead { font-weight: 300; font-size: 20px; line-height: 30px; color: #777; margin-top: 13px; }
.copy { line-height: 28px; margin-top: 32px; white-space: nowrap; }

.clients { display: grid; }
.clients li { display: flex; align-items: center; justify-content: center; margin-bottom: -1px; border-right: 1px dashed #ddd; border-bottom: 1px dashed #ddd; }
.four { grid-template-columns: repeat(4, 185px); grid-auto-rows: 144px; }
.six { grid-template-columns: repeat(6, 215px); grid-auto-rows: 161px; margin-top: 50px; }
.four svg { width: 139px; height: 104px; }
.six svg { width: 162px; height: 121px; }
.four li:nth-child(4n), .six li:nth-child(6n) { border-right: 0; }
.four li:nth-child(n+9), .six li:nth-child(n+13) { border-bottom: 0; margin-bottom: 0; }

.divider { display: flex; align-items: center; height: 40px; margin-top: 48px; }
.divider::before, .divider::after { content: ""; flex: 1; height: 1px; background: #eee; }
.divider span { width: 40px; height: 40px; border: 1px solid #eee; border-radius: 50%; display: flex; align-items: center; justify-content: center; }

.heading { text-align: center; margin-top: 51px; }
.heading p { font-weight: 300; font-size: 20px; line-height: 30px; color: #777; margin-top: 13px; }
.heading::after { content: ""; display: block; width: 40px; height: 2px; background: #444; margin: 30px auto 0; }

/* Call to action */
.cta { display: flex; align-items: center; justify-content: center; height: 102px; margin-top: 48px; padding: 2px 2px 0 0; background: #f08152; border-bottom: 3px solid #c76c46; color: #fff; font-family: "Noto Sans CJK SC", "Noto Sans", sans-serif; font-size: 24px; letter-spacing: .660px; line-height: 36px; text-shadow: 1px 1px 1px rgba(0, 0, 0, .15); white-space: nowrap; }
.cta span { font-weight: 300; }
.cta strong { font-weight: 700; border-bottom: 2px solid #f5e9e4; margin-left: 7px; height: 36px; }
.cta svg { width: 10px; height: 14px; margin-left: 14px; }

/* Footer */
.footer { height: 426px; border-top: 5px solid #444; background: #282828; color: #ccc; }
.footer-row { display: flex; justify-content: space-between; padding-top: 80px; }
.f-main { width: 960px; }
.about { display: flex; height: 85px; border-bottom: 1px solid #444; font-size: 16px; line-height: 27px; }
.about svg { margin-top: 2px; }
.bar { width: 1px; height: 24px; margin: 8px 20px 0 18px; background: #444; }
.about p { white-space: nowrap; }
.links { display: grid; grid-template-columns: repeat(4, 247.500px); padding-top: 26px; font-size: 15px; line-height: 30px; }
.links li { position: relative; padding-left: 17px; }
.links li::before { content: ""; position: absolute; left: -3px; top: 12px; width: 7px; height: 7px; border: solid #ccc; border-width: 1.500px 1.500px 0 0; transform: rotate(45deg) scale(.85); }
.f-side { width: 300px; margin-top: -3px; }
.label { display: block; font-size: 11.500px; line-height: 20px; letter-spacing: 2px; color: #888; }
.big { display: block; font-size: 24px; line-height: 32px; letter-spacing: 1px; color: #d8d8d8; margin: 2px 0 28px; white-space: nowrap; }
.follow { display: flex; margin-top: 51px; font-size: 13px; line-height: 19px; }
.f-item { display: flex; flex: none; width: 165px; white-space: nowrap; }
.sq { width: 40px; height: 40px; border-radius: 3px; display: flex; align-items: center; justify-content: center; color: #fff; margin-right: 10px; }
.f-item p { margin-top: 3px; letter-spacing: -.05px; }
.fb { background: #3b5998; }
.rss { background: #ee8131; }

.copyrights { height: 131px; background: #202020; color: #7a7a7a; font-size: 14px; line-height: 25px; }
.copy-row { display: flex; justify-content: space-between; padding-top: 40px; }
.copy-row p a { display: inline-block; height: 26px; border-bottom: 1px dotted #999; }
.copy-row p i { margin: 0 7px; }
.c-links { padding-right: 10px; }
.c-links i { margin: 0 10px; }
```
